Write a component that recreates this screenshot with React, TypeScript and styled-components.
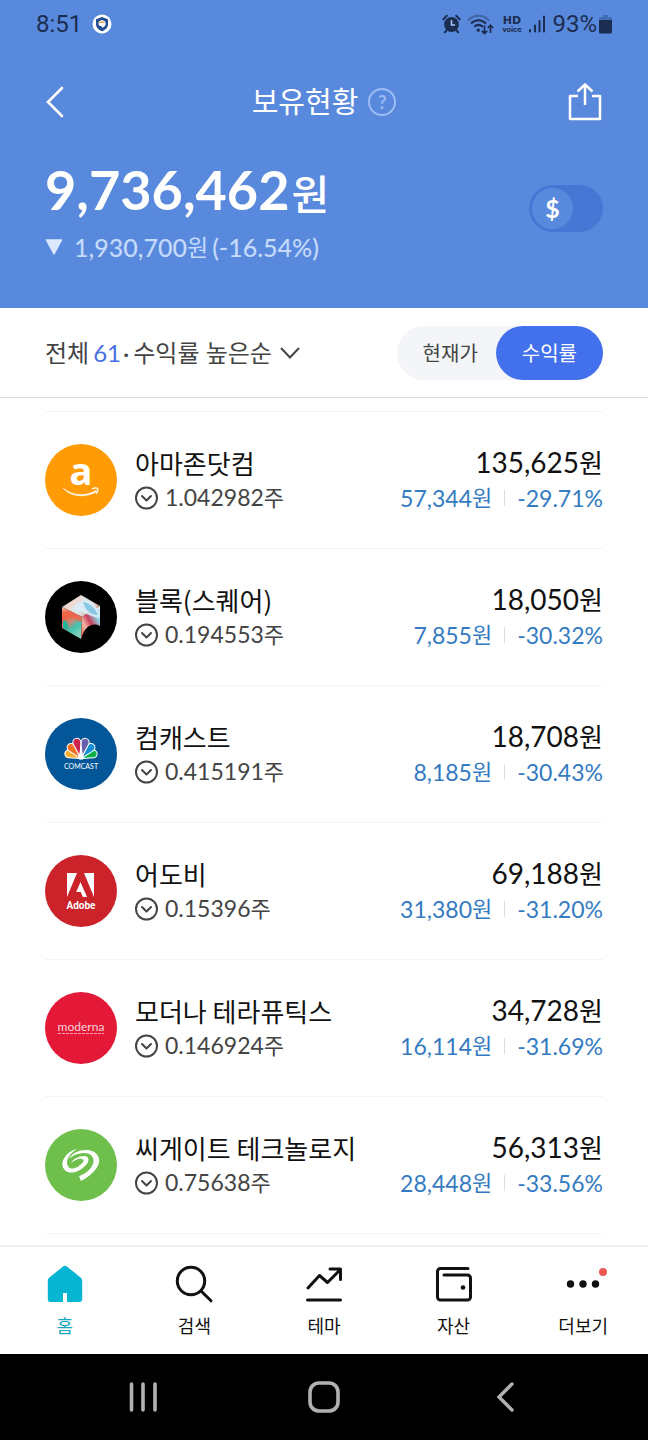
import React from 'react';
import styled, { createGlobalStyle, css } from 'styled-components';

const GlobalStyle = createGlobalStyle`
  *, *::before, *::after { box-sizing: border-box; }
  body {
    margin: 0;
    background: #fff;
    color: #111;
    font-family: Lato, "Noto Sans CJK KR", sans-serif;
  }
  button, select, input { font: inherit; color: inherit; margin: 0; }
  button { border: 0; padding: 0; background: none; cursor: pointer; }
  svg { display: block; flex: none; }
`;

const Screen = styled.div`
  min-height: 100vh;
  display: flex;
  flex-direction: column;
`;

const Hero = styled.header`
  background: #5989dc;
  color: #fff;
  padding: 0 45px 43px;
`;

const StatusBar = styled.div`
  display: flex;
  align-items: center;
  justify-content: space-between;
  height: 48px;
  margin: 0 -10px;
  color: #1b2d50;
  font: 24px/28px Roboto, sans-serif;
`;

const StatusGroup = styled.div<{ $gap: number }>`
  display: flex;
  align-items: center;
  gap: ${(p) => p.$gap}px;
  padding: 0 1px;
`;

const Battery = styled.span`
  display: flex;
  align-items: center;
  gap: 2px;
`;

const TitleBar = styled.div`
  display: flex;
  align-items: center;
  justify-content: space-between;
  height: 60px;
  margin-top: 24px;
`;

const IconButton = styled.button`
  display: flex;
  width: 36px;
  color: #fff;
`;

const TitleGroup = styled.div`
  display: flex;
  align-items: center;
  gap: 10px;
`;

const Title = styled.h1`
  margin: 0;
  font-size: 29px;
  line-height: 40px;
  font-weight: 400;
`;

const HelpButton = styled.button`
  width: 28px;
  height: 28px;
  border: 2px solid #9bbcf6;
  border-radius: 50%;
  color: #9bbcf6;
  font-size: 18px;
  line-height: 24px;
  font-weight: 700;
`;

const Summary = styled.div`
  display: flex;
  align-items: center;
  justify-content: space-between;
  margin-top: 24px;
`;

const Total = styled.p`
  margin: 0;
  font-size: 54px;
  line-height: 68px;
  font-weight: 700;
`;

const TotalUnit = styled.span`
  margin-left: 2px;
  font-size: 41px;
  font-weight: 500;
`;

const Change = styled.p`
  display: flex;
  align-items: center;
  margin: 0;
  color: #c5dafc;
  font-size: 25px;
  line-height: 36px;
  font-weight: 500;
  svg { margin-right: 11px; }
`;

const ChangeUnit = styled.span`
  margin-right: 4px;
  font-size: 23px;
  font-weight: 400;
`;

const CurrencySwitch = styled.label`
  display: flex;
  align-items: center;
  width: 74px;
  height: 47px;
  margin-bottom: 4px;
  padding: 3px;
  border-radius: 24px;
  background: #4777d5;
  cursor: pointer;
`;

const HiddenInput = styled.input`
  appearance: none;
  width: 0;
  height: 0;
`;

const SwitchKnob = styled.span`
  width: 41px;
  height: 41px;
  border-radius: 50%;
  background: #5989dc;
  font-size: 25px;
  line-height: 40px;
  font-weight: 700;
  text-align: center;
`;

const FilterBar = styled.div`
  display: flex;
  align-items: center;
  justify-content: space-between;
  height: 90px;
  padding: 0 45px;
  border-bottom: 1px solid #dcdcde;
`;

const SortControl = styled.label`
  display: flex;
  align-items: center;
  color: #444;
  font-size: 24px;
  line-height: 36px;
`;

const Count = styled.span`
  margin: 0 2px 0 4px;
  color: #466fe4;
`;

const SortSelect = styled.select`
  appearance: none;
  margin: 0 7px 0 4px;
  padding: 0;
  border: 0;
  background: none;
  line-height: 36px;
`;

const Segment = styled.div`
  display: flex;
  height: 54px;
  border-radius: 27px;
  background: #f4f5f8;
`;

const SegmentOption = styled.label<{ $active?: boolean }>`
  display: flex;
  align-items: center;
  padding: 0 18px 0 26px;
  border-radius: 27px;
  color: #444;
  font-size: 20px;
  line-height: 30px;
  cursor: pointer;
  ${(p) => p.$active && css`
    padding: 0 26px;
    background: #4370ec;
    color: #fff;
  `}
`;

const Holdings = styled.ul`
  flex: 1;
  list-style: none;
  margin: 13px 45px 11px;
  padding: 0;
  border-top: 1px solid #f4f4f5;
`;

const HoldingRow = styled.li`
  display: flex;
  align-items: center;
  height: 137px;
  border-bottom: 1px solid #f4f4f5;
`;

const Details = styled.div`
  flex: 1;
  margin-left: 18px;
`;

const Name = styled.h2`
  margin: 0;
  font-family: "Noto Sans CJK KR", sans-serif;
  font-size: 26px;
  line-height: 35px;
  font-weight: 400;
`;

const Shares = styled.button`
  display: flex;
  align-items: center;
  gap: 6px;
  color: #444;
  font-size: 23px;
  line-height: 34px;
`;

const ShareUnit = styled.span`
  font-size: 22px;
`;

const Figures = styled.div`
  text-align: right;
`;

const Price = styled.div`
  font-size: 28px;
  line-height: 35px;
`;

const PriceUnit = styled.span`
  font-size: 26px;
`;

const Returns = styled.div`
  display: flex;
  align-items: center;
  justify-content: flex-end;
  color: #347bc2;
  font-size: 23px;
  line-height: 34px;
`;

const ReturnUnit = styled.span`
  font-size: 22px;
`;

const Separator = styled.span`
  width: 1px;
  height: 16px;
  margin: 0 12px;
  background: #dcdde0;
`;

const TabBar = styled.nav`
  display: flex;
  height: 109px;
  border-top: 2px solid #f1f1f2;
`;

const Tab = styled.a<{ $active?: boolean }>`
  flex: 1;
  display: flex;
  flex-direction: column;
  align-items: center;
  gap: 9px;
  padding-top: 17px;
  color: ${(p) => (p.$active ? '#15a8bf' : '#111')};
  font-size: 18px;
  line-height: 26px;
  text-decoration: none;
`;

const SystemBar = styled.div`
  display: flex;
  height: 86px;
  padding: 0 52px;
  background: #000;
`;

const SystemButton = styled.button`
  flex: 1;
  display: flex;
  align-items: center;
  justify-content: center;
  color: #b1b1b1;
`;

const ShieldIcon = () => (
  <svg width="20" height="20" viewBox="0 0 20 20" aria-hidden="true">
    <circle cx="10" cy="10" r="9.500" fill="#fff" />
    <path d="M10 3 16 5.200V10c0 3.500-2.500 6-6 7.200C6.500 16 4 13.500 4 10V5.200z" fill="#254d93" />
    <path d="M6.500 8.200C8 5.800 12.500 5.600 13.600 8.500c.6 2.300-.8 4.500-3.200 5.300L9 12l-2.200-.6z" fill="#fff" />
    <path d="M7 8.300h5.500" stroke="#e1a34c" strokeWidth="1.400" />
  </svg>
);

const AlarmIcon = () => (
  <svg width="19" height="20" viewBox="0 0 19 20" aria-hidden="true">
    <circle cx="9.500" cy="10.500" r="7.400" fill="currentColor" />
    <path d="M1.300 5.200 4.800 1.800M17.700 5.200l-3.500-3.400M4.800 16l-2 2.300M14.200 16l2 2.300" stroke="currentColor" strokeWidth="2" strokeLinecap="round" />
    <path d="M9.500 6v5h3.600" fill="none" stroke="#a9c4f4" strokeWidth="1.600" />
  </svg>
);

const WifiIcon = () => (
  <svg width="29" height="21" viewBox="0 0 29 21" fill="none" stroke="currentColor" strokeWidth="2" aria-hidden="true">
    <path d="M1 6.500C7 .2 16 .2 22 6.500" opacity=".4" />
    <path d="M4 9.500c4.500-4.300 10.500-4.300 15 0M7.200 12.800c2.600-2.300 6-2.300 8.600 0" />
    <circle cx="11.300" cy="16.200" r="1.600" fill="currentColor" stroke="none" />
    <path d="M17.500 11.500v7.700M14.800 16.800l2.700 2.700 2.700-2.700M23.500 19v-7.500M20.800 14l2.700-2.700 2.700 2.700" strokeWidth="1.700" />
  </svg>
);

const HdVoiceIcon = () => (
  <svg width="20" height="28" viewBox="0 0 20 28" fill="currentColor" fontWeight="700" textAnchor="middle" aria-hidden="true">
    <text x="10" y="14" fontFamily="DejaVu Sans, sans-serif" fontSize="11">HD</text>
    <text x="10" y="22" fontFamily="Roboto, sans-serif" fontSize="8">voice</text>
  </svg>
);

const SignalIcon = () => (
  <svg width="18" height="18" viewBox="0 0 18 18" fill="none" stroke="currentColor" strokeWidth="2" strokeLinecap="round" aria-hidden="true">
    <path d="M2 15v1.500M7 10.500v6M11.500 6v10.500M16 1.500v15" />
  </svg>
);

const BatteryIcon = () => (
  <svg width="13" height="20" viewBox="0 0 13 20" aria-hidden="true">
    <path d="M4 1h5v2h2.500A1.500 1.500 0 0 1 13 4.500V7H0V4.500A1.500 1.500 0 0 1 1.500 3H4z" fill="#406cb4" />
    <path d="M0 6h13v12a1.500 1.500 0 0 1-1.500 1.500h-10A1.500 1.500 0 0 1 0 18z" fill="currentColor" />
  </svg>
);

const BackIcon = () => (
  <svg width="20" height="34" viewBox="0 0 20 34" fill="none" stroke="currentColor" strokeWidth="2.600" strokeLinecap="round" aria-hidden="true">
    <path d="M17 3 3 17l14 14" />
  </svg>
);

const ShareIcon = () => (
  <svg width="36" height="40" viewBox="0 0 36 40" fill="none" stroke="currentColor" strokeWidth="2.500" strokeLinejoin="round" aria-hidden="true">
    <path d="M11 14H3v23h30V14h-8M18 23V3M10.500 9.500 18 2.500l7.500 7" />
  </svg>
);

const ExpandIcon = () => (
  <svg width="24" height="24" viewBox="0 0 24 24" fill="none" stroke="#444" strokeWidth="2" aria-hidden="true">
    <circle cx="11.500" cy="12" r="10.500" />
    <path d="m7 10 4.500 4.500L16 10" strokeLinecap="round" strokeLinejoin="round" />
  </svg>
);

const AmazonLogo = () => (
  <svg width="72" height="72" viewBox="0 0 72 72" aria-hidden="true">
    <circle cx="36" cy="36" r="36" fill="#ff9b05" />
    <text x="36" y="41" fill="#fff" fontFamily="Open Sans, sans-serif" fontSize="38" fontWeight="700" textAnchor="middle">a</text>
    <path d="M18 44c9 7.500 22 9 33 2.500l1 .8C42 54 26 53.500 18 44z" fill="#fff" stroke="#fff" strokeWidth=".5" />
    <path d="M47 44.800c2-.9 4.600-1.200 5.600-.4.700 1-.2 3.700-1.600 5.400" fill="none" stroke="#fff" strokeWidth="1.300" />
  </svg>
);

const BlockLogo = () => (
  <svg width="72" height="72" viewBox="0 0 72 72" aria-hidden="true">
    <defs>
      <linearGradient id="block-top" x1="0" y1="0" x2="1" y2=".5">
        <stop offset="0" stopColor="#8fb9b2" />
        <stop offset=".35" stopColor="#f2d9d0" />
        <stop offset=".65" stopColor="#d9e9ee" />
        <stop offset="1" stopColor="#e2a08c" />
      </linearGradient>
      <linearGradient id="block-left" x1="0" y1="0" x2=".5" y2="1">
        <stop offset="0" stopColor="#f4b9a2" />
        <stop offset=".3" stopColor="#ee5d45" />
        <stop offset=".55" stopColor="#c98a78" />
        <stop offset=".75" stopColor="#3fc2ae" />
        <stop offset="1" stopColor="#7fd0bb" />
      </linearGradient>
      <linearGradient id="block-right" x1="0" y1="1" x2="1" y2="0">
        <stop offset="0" stopColor="#e5523c" />
        <stop offset=".3" stopColor="#f3b4a4" />
        <stop offset=".5" stopColor="#c9405a" />
        <stop offset=".75" stopColor="#8fd3e6" />
        <stop offset="1" stopColor="#f0f4fa" />
      </linearGradient>
    </defs>
    <circle cx="36" cy="36" r="36" fill="#000" />
    <path d="m36 14 19 11-18 11-20-10z" fill="url(#block-top)" />
    <path d="m17 26 20 10-1 22-19-11z" fill="url(#block-left)" />
    <path d="m37 36 18-11v20c-8-4-15 0-19 13z" fill="url(#block-right)" />
    <path d="M26 28c8-8 16-9 21-7 4 2 6 8 8 16-11-1-17-8-29-9z" fill="#dcecf9" opacity=".9" />
    <path d="M38 21c7 1 12 6 15 13-7 0-13-5-15-13z" fill="#76bfe0" opacity=".8" />
    <path d="M17 30c7 0 14 2 20 6l-1 5c-6-4-13-5-19-5z" fill="#f2644b" opacity=".85" />
    <path d="M18 40c4-2 6 4 5 9l-5-2z" fill="#24b29d" />
  </svg>
);

const petals = [
  { angle: -67, length: 17, color: '#fbb034' },
  { angle: 67, length: 17, color: '#0db14b' },
  { angle: -41, length: 19, color: '#f37021' },
  { angle: 41, length: 19, color: '#1490d3' },
  { angle: -14, length: 21, color: '#ca2350' },
  { angle: 14, length: 21, color: '#6a5fac' },
];

const ComcastLogo = () => (
  <svg width="72" height="72" viewBox="0 0 72 72" aria-hidden="true">
    <circle cx="36" cy="36" r="36" fill="#035698" />
    <g transform="translate(36 41)" stroke="#fff" strokeWidth="1">
      {petals.map((p) => (
        <path
          key={p.angle}
          transform={`rotate(${p.angle})`}
          d={`M0-1-3.800-${p.length - 5}a4 4 0 1 1 7.600 0z`}
          fill={p.color}
        />
      ))}
      <path d="M-2 0 0-13 2 0z" fill="#fff" />
    </g>
    <text x="36" y="51" fill="#fff" fontFamily="Lato, sans-serif" fontSize="7" textAnchor="middle">COMCAST</text>
  </svg>
);

const AdobeLogo = () => (
  <svg width="72" height="72" viewBox="0 0 72 72" aria-hidden="true">
    <circle cx="36" cy="36" r="36" fill="#cc2229" />
    <path d="M22 18h10L22 42zM39 18h10v24zM35.500 27 42 42h-4.200l-2-5h-4.600z" fill="#fff" />
    <text x="36" y="54" fill="#fff" fontFamily="Roboto, sans-serif" fontSize="10" fontWeight="700" textAnchor="middle">Adobe</text>
  </svg>
);

const ModernaLogo = () => (
  <svg width="72" height="72" viewBox="0 0 72 72" aria-hidden="true">
    <circle cx="36" cy="36" r="36" fill="#e41937" />
    <text x="36" y="39" fill="#fbd3da" fontFamily="Lato, sans-serif" fontSize="12" textAnchor="middle">moderna</text>
    <path d="M13 41.500h46" stroke="#f6a3b1" strokeWidth="1" strokeDasharray="3 1" />
  </svg>
);

const SeagateLogo = () => (
  <svg width="72" height="72" viewBox="0 0 72 72" aria-hidden="true">
    <circle cx="36" cy="36" r="36" fill="#6fbf4d" />
    <g fill="#fff">
      <path d="M32 20C22 22 14 33 19 40c4 6 14 4 20-2 6-5 6-11 0-11-5 0-11 3-13 7 4-3 8-5 11-4 3 1 1 4-2 6-4 4-10 5-12 1-3-5 1-12 9-17z" />
      <path d="M24 30c3-6 10-9 17-9 12 0 17 10 10 19-4 5-9 9-15 12l-2-5c6-2 10-5 13-10 4-7 0-13-8-13-6 0-11 2-15 6z" />
    </g>
  </svg>
);

const HomeIcon = () => (
  <svg width="40" height="40" viewBox="0 0 40 40" aria-hidden="true">
    <path d="M17.800 2.700a3.400 3.400 0 0 1 4.400 0l13.700 11a3.500 3.500 0 0 1 1.300 2.800V35a3 3 0 0 1-3 3H22v-9h-4v9H5.800a3 3 0 0 1-3-3V16.500a3.500 3.500 0 0 1 1.300-2.800z" fill="#05b5d1" />
  </svg>
);

const SearchIcon = () => (
  <svg width="40" height="40" viewBox="0 0 40 40" fill="none" stroke="currentColor" strokeWidth="3" strokeLinecap="round" aria-hidden="true">
    <circle cx="17" cy="17" r="13.700" />
    <path d="m27 27 10 9.800" />
  </svg>
);

const TrendIcon = () => (
  <svg width="40" height="40" viewBox="0 0 40 40" fill="none" stroke="currentColor" strokeWidth="3" strokeLinecap="round" strokeLinejoin="round" aria-hidden="true">
    <path d="M4 24 15.500 11.500l8 7L36.500 5.500M26 5h10.500v10.500M3.500 36h33" />
  </svg>
);

const WalletIcon = () => (
  <svg width="40" height="40" viewBox="0 0 40 40" fill="none" stroke="currentColor" strokeWidth="3" strokeLinecap="round" strokeLinejoin="round" aria-hidden="true">
    <path d="M34 4.500H6.500a3 3 0 0 0-3 3V33a3 3 0 0 0 3 3h27a3 3 0 0 0 3-3V14a3 3 0 0 0-3-3H10" />
    <circle cx="29" cy="23.500" r="2.300" fill="currentColor" stroke="none" />
  </svg>
);

const MoreIcon = () => (
  <svg width="48" height="40" viewBox="0 0 48 40" fill="currentColor" aria-hidden="true">
    <circle cx="11.500" cy="20" r="3.700" />
    <circle cx="24" cy="20" r="3.700" />
    <circle cx="36.500" cy="20" r="3.700" />
    <circle cx="44" cy="8" r="4" fill="#ee5b55" />
  </svg>
);

const holdings = [
  { name: '아마존닷컴', shares: '1.042982', price: '135,625', gain: '57,344', rate: '-29.71%', Logo: AmazonLogo },
  { name: '블록(스퀘어)', shares: '0.194553', price: '18,050', gain: '7,855', rate: '-30.32%', Logo: BlockLogo },
  { name: '컴캐스트', shares: '0.415191', price: '18,708', gain: '8,185', rate: '-30.43%', Logo: ComcastLogo },
  { name: '어도비', shares: '0.15396', price: '69,188', gain: '31,380', rate: '-31.20%', Logo: AdobeLogo },
  { name: '모더나 테라퓨틱스', shares: '0.146924', price: '34,728', gain: '16,114', rate: '-31.69%', Logo: ModernaLogo },
  { name: '씨게이트 테크놀로지', shares: '0.75638', price: '56,313', gain: '28,448', rate: '-33.56%', Logo: SeagateLogo },
];

const tabs = [
  { label: '홈', Icon: HomeIcon, active: true },
  { label: '검색', Icon: SearchIcon },
  { label: '테마', Icon: TrendIcon },
  { label: '자산', Icon: WalletIcon },
  { label: '더보기', Icon: MoreIcon },
];

export default function App() {
  return (
    <Screen>
      <GlobalStyle />
      <Hero>
        <StatusBar>
          <StatusGroup $gap={10}>
            <span>8:51</span>
            <ShieldIcon />
          </StatusGroup>
          <StatusGroup $gap={6}>
            <AlarmIcon />
            <WifiIcon />
            <HdVoiceIcon />
            <SignalIcon />
            <Battery>
              93%
              <BatteryIcon />
            </Battery>
          </StatusGroup>
        </StatusBar>
        <TitleBar>
          <IconButton type="button" aria-label="뒤로">
            <BackIcon />
          </IconButton>
          <TitleGroup>
            <Title>보유현황</Title>
            <HelpButton type="button">?</HelpButton>
          </TitleGroup>
          <IconButton type="button" aria-label="공유">
            <ShareIcon />
          </IconButton>
        </TitleBar>
        <Summary>
          <div>
            <Total>
              9,736,462<TotalUnit>원</TotalUnit>
            </Total>
            <Change>
              <svg width="18" height="16" viewBox="0 0 18 16" aria-hidden="true">
                <path d="M1.500 1h15L9 15z" fill="#dce8ff" stroke="#dce8ff" strokeWidth="1.500" strokeLinejoin="round" />
              </svg>
              1,930,700<ChangeUnit>원</ChangeUnit>(-16.54%)
            </Change>
          </div>
          <CurrencySwitch>
            <HiddenInput type="checkbox" role="switch" />
            <SwitchKnob>$</SwitchKnob>
          </CurrencySwitch>
        </Summary>
      </Hero>
      <FilterBar>
        <SortControl>
          전체<Count>61</Count>·
          <SortSelect>
            <option>수익률 높은순</option>
          </SortSelect>
          <svg width="22" height="14" viewBox="0 0 22 14" fill="none" stroke="#444" strokeWidth="2" aria-hidden="true">
            <path d="m2 2 9 9.500L20 2" />
          </svg>
        </SortControl>
        <Segment role="radiogroup">
          <SegmentOption>
            <HiddenInput type="radio" name="display" />
            현재가
          </SegmentOption>
          <SegmentOption $active>
            <HiddenInput type="radio" name="display" defaultChecked />
            수익률
          </SegmentOption>
        </Segment>
      </FilterBar>
      <Holdings>
        {holdings.map(({ name, shares, price, gain, rate, Logo }) => (
          <HoldingRow key={name}>
            <Logo />
            <Details>
              <Name>{name}</Name>
              <Shares type="button">
                <ExpandIcon />
                <span>
                  {shares}
                  <ShareUnit>주</ShareUnit>
                </span>
              </Shares>
            </Details>
            <Figures>
              <Price>
                {price}
                <PriceUnit>원</PriceUnit>
              </Price>
              <Returns>
                {gain}
                <ReturnUnit>원</ReturnUnit>
                <Separator />
                {rate}
              </Returns>
            </Figures>
          </HoldingRow>
        ))}
      </Holdings>
      <TabBar>
        {tabs.map(({ label, Icon, active }) => (
          <Tab key={label} href="#" $active={active}>
            <Icon />
            {label}
          </Tab>
        ))}
      </TabBar>
      <SystemBar>
        <SystemButton type="button" aria-label="최근 앱">
          <svg width="30" height="32" viewBox="0 0 30 32" stroke="currentColor" strokeWidth="3.600" strokeLinecap="round">
            <path d="M3.500 3v26M15 3v26M27 3v26" />
          </svg>
        </SystemButton>
        <SystemButton type="button" aria-label="홈 화면">
          <svg width="34" height="34" viewBox="0 0 34 34" fill="none" stroke="currentColor" strokeWidth="3.600">
            <rect x="3" y="3" width="28" height="28" rx="9" />
          </svg>
        </SystemButton>
        <SystemButton type="button" aria-label="이전">
          <svg width="20" height="32" viewBox="0 0 20 32" fill="none" stroke="currentColor" strokeWidth="3.400" strokeLinecap="round">
            <path d="M17 3 4 16l13 13" />
          </svg>
        </SystemButton>
      </SystemBar>
    </Screen>
  );
}
